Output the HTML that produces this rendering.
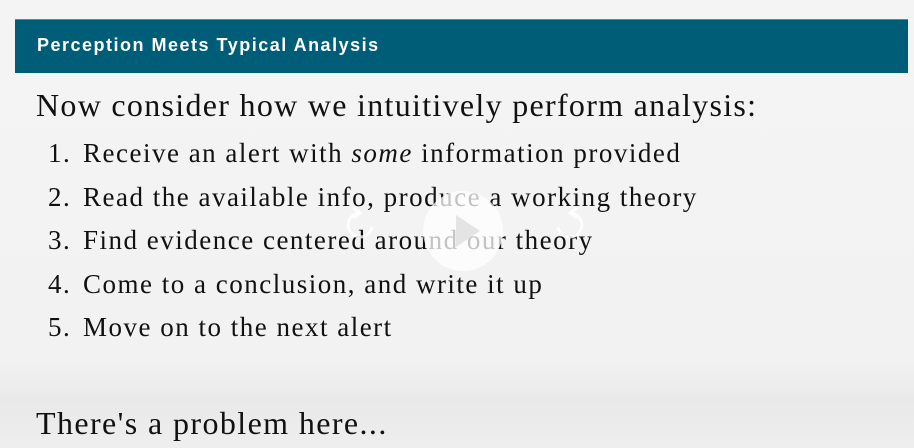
<!DOCTYPE html>
<html><head><style>
html,body{margin:0;padding:0}
body{width:914px;height:448px;overflow:hidden;position:relative;background:linear-gradient(#f4f4f4 0,#f2f2f2 360px,#e9e9e9 400px,#eeeeee 448px);font-family:"Liberation Serif",serif;color:#111}
.bar{position:absolute;left:15px;top:19px;width:893px;height:53px;background:#005d78;border-top:1px solid #4a90a8}
.bar span{position:absolute;left:22px;top:15px;color:#fff;font-family:"Liberation Sans",sans-serif;font-weight:bold;font-size:18px;letter-spacing:1.5px}
.h{position:absolute;left:36px;top:87px;font-size:32px;letter-spacing:1.3px;white-space:nowrap}
ol{position:absolute;left:0;top:138px;margin:0;padding:0;list-style:none;font-size:27px;letter-spacing:1.5px}
ol li{height:43.5px;white-space:nowrap;position:relative;padding-left:83px}
ol li b{font-weight:normal;position:absolute;left:48px}
.b{position:absolute;left:36px;top:405px;font-size:32px;letter-spacing:1.4px}
.play{position:absolute;left:423px;top:191px;width:80px;height:80px;border-radius:50%;background:rgba(255,255,255,0.75)}
.play:after{content:"";position:absolute;left:33px;top:24px;border-left:24px solid rgba(225,225,225,0.9);border-top:16px solid transparent;border-bottom:16px solid transparent}
</style></head><body>
<div class="bar"><span>Perception Meets Typical Analysis</span></div>
<div class="h">Now consider how we intuitively perform analysis:</div>
<ol>
<li><b>1.</b>Receive an alert with <i>some</i> information provided</li>
<li><b>2.</b>Read the available info, produce a working theory</li>
<li><b>3.</b>Find evidence centered around our theory</li>
<li><b>4.</b>Come to a conclusion, and write it up</li>
<li><b>5.</b>Move on to the next alert</li>
</ol>
<div class="play"></div>
<svg style="position:absolute;left:340px;top:205px" width="40" height="40"><path d="M20 8 A12 12 0 1 0 32 22" fill="none" stroke="rgba(255,255,255,0.8)" stroke-width="3"/><path d="M13 3 L20 8 L13 13" fill="none" stroke="rgba(255,255,255,0.8)" stroke-width="3"/></svg>
<svg style="position:absolute;left:550px;top:205px" width="40" height="40"><path d="M20 8 A12 12 0 1 1 8 22" fill="none" stroke="rgba(255,255,255,0.8)" stroke-width="3"/><path d="M27 3 L20 8 L27 13" fill="none" stroke="rgba(255,255,255,0.8)" stroke-width="3"/></svg>
<div class="b">There's a problem here...</div>
</body></html>
